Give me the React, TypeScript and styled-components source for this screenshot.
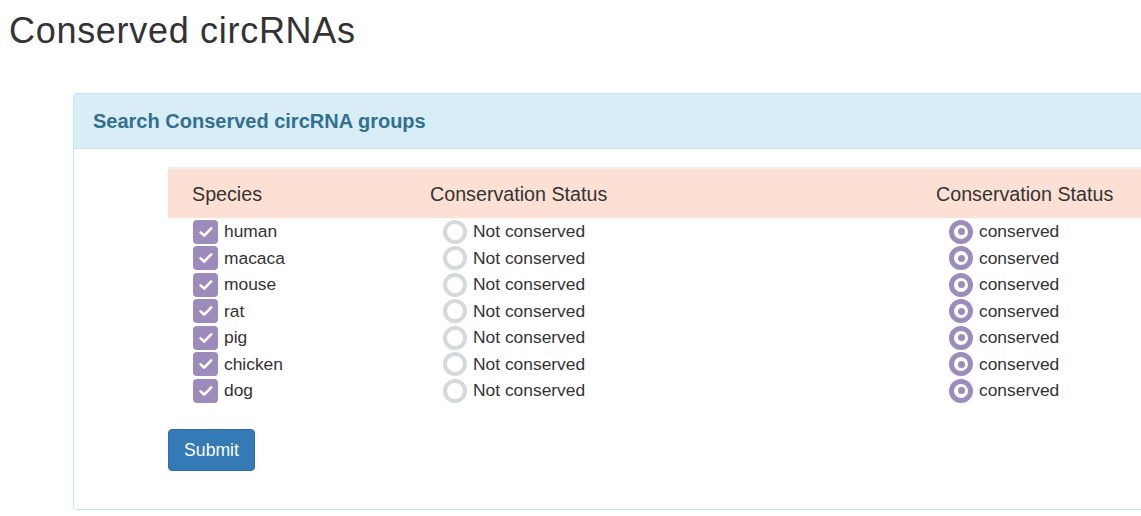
import React from "react";
import styled, { createGlobalStyle } from "styled-components";

const GlobalStyle = createGlobalStyle`
  html, body {
    margin: 0;
    padding: 0;
    background: #fff;
    overflow: hidden;
  }
  body {
    font-family: "Liberation Sans", Arial, Helvetica, sans-serif;
    color: #333;
  }
`;

const Page = styled.div`
  width: 1141px;
  height: 516px;
  overflow: hidden;
`;

const Title = styled.h1`
  margin: 11px 0 0 9px;
  font-size: 36px;
  font-weight: 400;
  line-height: 1.1;
  letter-spacing: 0.7px;
  color: #333;
`;

const Panel = styled.div`
  margin: 42px 0 0 73px;
  width: 1120px;
  height: 417px;
  box-sizing: border-box;
  border: 1px solid #bce8f1;
  border-radius: 4px;
  background: #fff;
`;

const PanelHeading = styled.div`
  padding: 16px 19px;
  background: #d9edf7;
  border-bottom: 1px solid #bce8f1;
  border-radius: 3px 3px 0 0;
  color: #31708f;
  font-size: 20px;
  font-weight: 700;
  line-height: 22px;
`;

const PanelBody = styled.div`
  padding: 18px 0 0 94px;
`;

const Table = styled.div`
  display: grid;
  grid-template-columns: 238px 506px 1fr;
  border-top: 2px solid #eee;
`;

const HeadCell = styled.div`
  height: 49px;
  display: flex;
  align-items: center;
  padding: 2px 0 0 24px;
  box-sizing: border-box;
  background: #fce0d4;
  font-size: 19.7px;
  color: #333;
  white-space: nowrap;
`;

const Cell = styled.div<{ $indent: number }>`
  height: 26.5px;
  display: flex;
  align-items: center;
  gap: 6px;
  padding-left: ${(p) => p.$indent}px;
  font-size: 17.4px;
  color: #333;
  white-space: nowrap;
  &:nth-child(-n + 6) {
    margin-top: 1px;
  }
`;

const Box = styled.span`
  width: 25px;
  height: 24px;
  border-radius: 4px;
  background: #9c8bbb;
  display: inline-flex;
  align-items: center;
  justify-content: center;
  flex: none;
`;

const Radio = styled.span<{ $on?: boolean }>`
  width: 24px;
  height: 24px;
  box-sizing: border-box;
  border-radius: 50%;
  border: ${(p) => (p.$on ? "5px solid #9c8bbb" : "4px solid #d4d9dc")};
  background: #fff;
  display: inline-flex;
  align-items: center;
  justify-content: center;
  flex: none;
  &::after {
    content: "";
    display: ${(p) => (p.$on ? "block" : "none")};
    width: 7px;
    height: 7px;
    border-radius: 50%;
    background: #9c8bbb;
  }
`;

const SubmitButton = styled.button`
  margin-top: 25px;
  width: 87px;
  height: 42px;
  border: 1px solid #2e6da4;
  border-radius: 4px;
  background: #337ab7;
  color: #fff;
  font-family: "Liberation Sans", Arial, sans-serif;
  font-size: 17.6px;
  padding: 0;
  cursor: pointer;
`;

const species = ["human", "macaca", "mouse", "rat", "pig", "chicken", "dog"];

const Check = () => (
  <Box>
    <svg width="18" height="18" viewBox="0 0 18 18">
      <path
        d="M3.6 9.4 L7.2 12.6 L14.2 5.4"
        fill="none"
        stroke="#fff"
        strokeWidth="2.6"
        strokeLinecap="round"
        strokeLinejoin="round"
      />
    </svg>
  </Box>
);

export default function App() {
  return (
    <Page>
      <GlobalStyle />
      <Title>Conserved circRNAs</Title>
      <Panel>
        <PanelHeading>Search Conserved circRNA groups</PanelHeading>
        <PanelBody>
          <Table>
            <HeadCell>Species</HeadCell>
            <HeadCell>Conservation Status</HeadCell>
            <HeadCell>Conservation Status</HeadCell>
            {species.map((s) => (
              <React.Fragment key={s}>
                <Cell $indent={25}>
                  <Check />
                  {s}
                </Cell>
                <Cell $indent={37}>
                  <Radio />
                  Not conserved
                </Cell>
                <Cell $indent={37}>
                  <Radio $on />
                  conserved
                </Cell>
              </React.Fragment>
            ))}
          </Table>
          <SubmitButton>Submit</SubmitButton>
        </PanelBody>
      </Panel>
    </Page>
  );
}
